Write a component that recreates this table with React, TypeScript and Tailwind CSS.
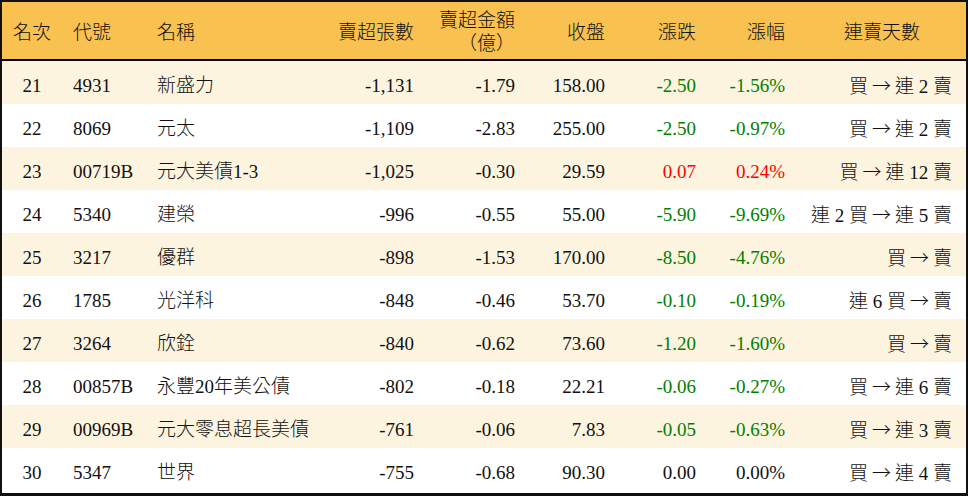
const rows = [
  { rank: 21, code: "4931", name: "新盛力", vol: "-1,131", amt: "-1.79", close: "158.00", chg: "-2.50", pct: "-1.56%", streak: "買 → 連 2 賣" },
  { rank: 22, code: "8069", name: "元太", vol: "-1,109", amt: "-2.83", close: "255.00", chg: "-2.50", pct: "-0.97%", streak: "買 → 連 2 賣" },
  { rank: 23, code: "00719B", name: "元大美債1-3", vol: "-1,025", amt: "-0.30", close: "29.59", chg: "0.07", pct: "0.24%", streak: "買 → 連 12 賣" },
  { rank: 24, code: "5340", name: "建榮", vol: "-996", amt: "-0.55", close: "55.00", chg: "-5.90", pct: "-9.69%", streak: "連 2 買 → 連 5 賣" },
  { rank: 25, code: "3217", name: "優群", vol: "-898", amt: "-1.53", close: "170.00", chg: "-8.50", pct: "-4.76%", streak: "買 → 賣" },
  { rank: 26, code: "1785", name: "光洋科", vol: "-848", amt: "-0.46", close: "53.70", chg: "-0.10", pct: "-0.19%", streak: "連 6 買 → 賣" },
  { rank: 27, code: "3264", name: "欣銓", vol: "-840", amt: "-0.62", close: "73.60", chg: "-1.20", pct: "-1.60%", streak: "買 → 賣" },
  { rank: 28, code: "00857B", name: "永豐20年美公債", vol: "-802", amt: "-0.18", close: "22.21", chg: "-0.06", pct: "-0.27%", streak: "買 → 連 6 賣" },
  { rank: 29, code: "00969B", name: "元大零息超長美債", vol: "-761", amt: "-0.06", close: "7.83", chg: "-0.05", pct: "-0.63%", streak: "買 → 連 3 賣" },
  { rank: 30, code: "5347", name: "世界", vol: "-755", amt: "-0.68", close: "90.30", chg: "0.00", pct: "0.00%", streak: "買 → 連 4 賣" },
]

const cols = "grid grid-cols-[60px_84px_184px_95px_101px_90px_91px_89px_1fr]"

function tone(v: string) {
  if (v.startsWith("-")) return "text-[#008000]"
  if (/^0\.00/.test(v)) return "text-[#111]"
  return "text-[#ff0000]"
}

function Streak({ text }: { text: string }) {
  const [from, to] = text.split(" → ")
  return (
    <>
      {from}
      <span className="mx-[4px]" style={{ fontFamily: '"Noto Sans CJK TC", sans-serif' }}>
        →
      </span>
      {to}
    </>
  )
}

export default function App() {
  return (
    <div
      className="w-[968px] h-[496px] bg-white text-[#111] text-[19px] overflow-hidden"
      style={{ fontFamily: '"Liberation Serif", "Noto Sans CJK TC", serif' }}
    >
      <div className="border-t-2 border-l-2 border-r-2 border-b-[3px] border-[#111] h-full flex flex-col">
        <div className={`${cols} h-[59px] bg-[#f8c150] border-b-2 border-black items-center font-light pt-[5px]`}>
          <div className="text-center">名次</div>
          <div className="pl-[11px]">代號</div>
          <div className="pl-[11px]">名稱</div>
          <div className="text-right pr-[11px]">賣超張數</div>
          <div className="text-right pr-[11px] leading-[23px] -mt-[2px]">
            賣超金額
            <br />
            （億）
          </div>
          <div className="text-right pr-[11px]">收盤</div>
          <div className="text-right pr-[11px]">漲跌</div>
          <div className="text-right pr-[11px]">漲幅</div>
          <div className="text-center pl-[2px]">連賣天數</div>
        </div>
        {rows.map((r, i) => (
          <div
            key={r.rank}
            className={`${cols} h-[43px] items-center pt-[7px] ${i % 2 === 0 ? "bg-[#fdf4e0]" : "bg-white"}`}
          >
            <div className="text-center">{r.rank}</div>
            <div className="pl-[11px]">{r.code}</div>
            <div className="pl-[11px] font-light">{r.name}</div>
            <div className="text-right pr-[11px]">{r.vol}</div>
            <div className="text-right pr-[11px]">{r.amt}</div>
            <div className="text-right pr-[11px]">{r.close}</div>
            <div className={`text-right pr-[11px] ${tone(r.chg)}`}>{r.chg}</div>
            <div className={`text-right pr-[11px] ${tone(r.pct)}`}>{r.pct}</div>
            <div className="text-right pr-[14px] font-light whitespace-nowrap">
              <Streak text={r.streak} />
            </div>
          </div>
        ))}
      </div>
    </div>
  )
}
